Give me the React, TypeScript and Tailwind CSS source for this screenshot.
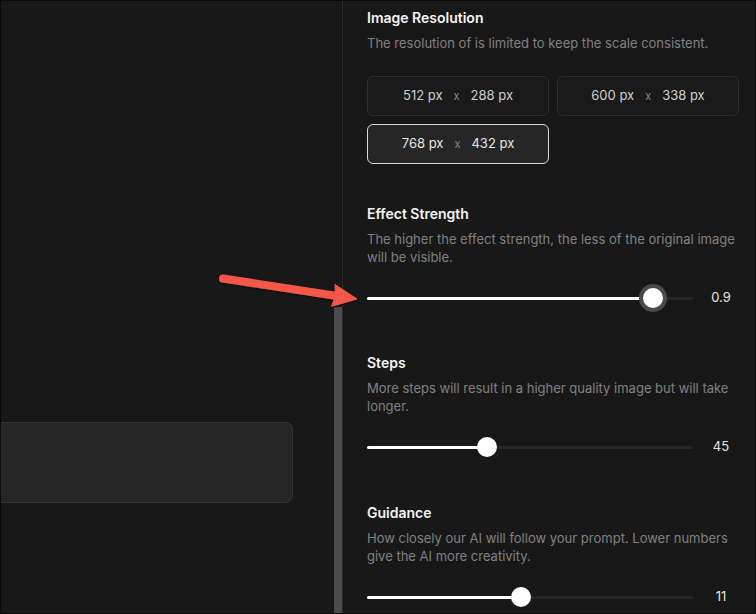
import React from "react";

const resolutions = [
  { w: 512, h: 288, selected: false },
  { w: 600, h: 338, selected: false },
  { w: 768, h: 432, selected: true },
];

const sliders = [
  {
    title: "Effect Strength",
    desc: "The higher the effect strength, the less of the original image will be visible.",
    value: "0.9",
    pct: 87.7,
    focused: true,
    mt: "mt-[40px]",
  },
  {
    title: "Steps",
    desc: "More steps will result in a higher quality image but will take longer.",
    value: "45",
    pct: 36.8,
    focused: false,
    mt: "mt-[43px]",
  },
  {
    title: "Guidance",
    desc: "How closely our AI will follow your prompt. Lower numbers give the AI more creativity.",
    value: "11",
    pct: 47.2,
    focused: false,
    mt: "mt-[44px]",
  },
];

function Slider({ pct, focused }: { pct: number; focused: boolean }) {
  return (
    <div className="relative h-[24px] flex-1 flex items-center">
      <div className="h-[3px] w-full rounded-full bg-[#272727]">
        <div className="h-full rounded-full bg-white" style={{ width: `${pct}%` }} />
      </div>
      <div
        className={
          focused
            ? "absolute top-1/2 h-[28px] w-[28px] -translate-x-1/2 -translate-y-1/2 rounded-full bg-white border-[4px] border-[#4a4a4a]"
            : "absolute top-1/2 h-[20px] w-[20px] -translate-x-1/2 -translate-y-1/2 rounded-full bg-white"
        }
        style={{ left: `${pct}%` }}
      />
    </div>
  );
}

export default function App() {
  return (
    <div
      className="relative flex h-[614px] w-[756px] overflow-hidden border border-[#0b0b0b] bg-[#181818]"
      style={{ fontFamily: "Inter, 'Noto Sans', sans-serif" }}
    >
      {/* left canvas area */}
      <div className="w-[333px] shrink-0 pt-[421px]">
        <div className="h-[81px] w-[292px] rounded-r-lg border border-l-0 border-[#333333] bg-[#262626]" />
      </div>

      {/* scrollbar */}
      <div className="flex w-[8px] shrink-0 flex-col">
        <div className="h-[306px] shrink-0" />
        <div className="flex-1 bg-[#4b4b4b]" />
      </div>

      {/* settings panel */}
      <div className="flex-1 border-l border-[#2a2a2a] pl-[24px] pt-[7px]">
        <div className="w-[372px]">
          <h3 className="text-[14px] leading-[20px] font-semibold text-[#f4f4f4]">Image Resolution</h3>
          <p className="mt-[6px] text-[13px] leading-[18px] text-[#808080]">
            The resolution of is limited to keep the scale consistent.
          </p>
          <div className="mt-[24px] grid grid-cols-2 gap-[8px]">
            {resolutions.map((r) => (
              <div
                key={r.w}
                className={
                  r.selected
                    ? "flex h-[40px] items-center justify-center gap-[11px] rounded-[6px] border border-[#d9d9d9] bg-[#262626] text-[13px] text-[#e6e6e6]"
                    : "flex h-[40px] items-center justify-center gap-[11px] rounded-[6px] border border-[#2f2f2f] bg-[#1a1a1a] text-[13px] text-[#cfcfcf]"
                }
              >
                <span>{r.w} px</span>
                <span className="text-[11px] text-[#8a8a8a]">x</span>
                <span>{r.h} px</span>
              </div>
            ))}
          </div>

          {sliders.map((s) => (
            <div key={s.title} className={s.mt}>
              <h3 className="text-[14px] leading-[20px] font-semibold text-[#f4f4f4]">{s.title}</h3>
              <p className="mt-[6px] text-[13px] leading-[18px] text-[#808080]">{s.desc}</p>
              <div className="mt-[20px] flex items-center">
                <div className="flex w-[326px] shrink-0">
                  <Slider pct={s.pct} focused={s.focused} />
                </div>
                <span className="ml-[11px] w-[34px] text-center text-[13px] text-[#e2e2e2]">{s.value}</span>
              </div>
            </div>
          ))}
        </div>
      </div>

      {/* annotation arrow */}
      <svg className="pointer-events-none absolute left-0 top-0" width="756" height="614" viewBox="0 0 756 614">
        <defs>
          <filter id="sh" x="-10%" y="-50%" width="120%" height="200%">
            <feDropShadow dx="0" dy="1" stdDeviation="1.2" floodColor="#000" floodOpacity="0.6" />
          </filter>
        </defs>
        <g filter="url(#sh)" fill="#f4574a" stroke="#f4574a">
          <line x1="222" y1="277.5" x2="336" y2="295" strokeWidth="8" strokeLinecap="round" />
          <polygon points="356,298 330.6,305.3 334.5,294.9 334,283.5" strokeWidth="1" strokeLinejoin="round" />
        </g>
      </svg>
    </div>
  );
}
